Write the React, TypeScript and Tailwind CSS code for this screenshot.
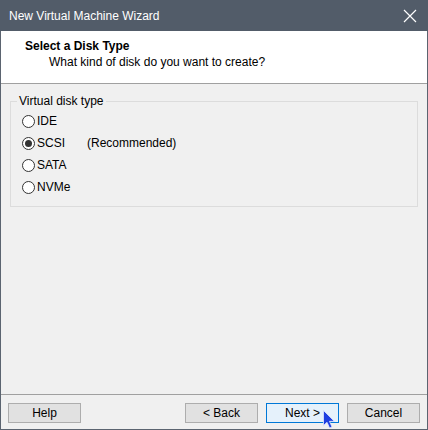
import React from 'react'

const FONT = "font-['Liberation_Sans',_Arial,_sans-serif]"

interface RadioRowProps {
  label: string
  checked?: boolean
  note?: string
}

function RadioRow({ label, checked, note }: RadioRowProps) {
  return (
    <div className="flex items-center h-[22px] ml-[5px]">
      <span className="w-[13px] h-[13px] rounded-full border border-[#333] bg-white flex items-center justify-center shrink-0">
        {checked && <span className="w-[7px] h-[7px] rounded-full bg-[#333]" />}
      </span>
      <span className="ml-[2px] w-[50px]">{label}</span>
      {note && <span>{note}</span>}
    </div>
  )
}

function Button({ children, primary }: { children: React.ReactNode; primary?: boolean }) {
  return (
    <button
      className={`w-[73px] h-[20px] border text-[12px] leading-none text-black flex items-center justify-center ${
        primary ? 'border-[#0078d7] bg-[#e5f1fb]' : 'border-[#adadad] bg-[#e1e1e1]'
      }`}
    >
      {children}
    </button>
  )
}

export default function App() {
  return (
    <div className={`relative w-[428px] h-[430px] flex flex-col text-[12px] text-black ${FONT}`}>
      <div className="h-[31px] bg-[#525c69] flex items-center justify-between pl-[9px] pr-[10px] shrink-0">
        <span className="text-white text-[12px]">New Virtual Machine Wizard</span>
        <svg width="14" height="14" viewBox="0 0 14 14" className="mr-[1px]">
          <path d="M1 1 L13 13 M13 1 L1 13" stroke="white" strokeWidth="1.2" />
        </svg>
      </div>

      <div className="flex-1 flex flex-col border-x border-b border-[#5b6470]">
        <div className="h-[53px] shrink-0 bg-white border-b border-[#a0a0a0] pl-[24px] pt-[7px]">
          <div className="font-bold leading-[16px]">Select a Disk Type</div>
          <div className="pl-[24px] leading-[16px]">What kind of disk do you want to create?</div>
        </div>

        <div className="flex-1 bg-[#f0f0f0] px-[9px] pt-[9px]">
          <fieldset className="h-[114px] border border-[#dcdcdc] px-[6px] pt-px">
            <legend className="px-[2px] leading-[16px]">Virtual disk type</legend>
            <RadioRow label="IDE" />
            <RadioRow label="SCSI" checked note="(Recommended)" />
            <RadioRow label="SATA" />
            <RadioRow label="NVMe" />
          </fieldset>
        </div>

        <div className="h-[35px] shrink-0 bg-[#f0f0f0] border-t border-[#a0a0a0] flex items-start pt-[8px] px-[7px]">
          <Button>Help</Button>
          <div className="flex-1" />
          <div className="flex gap-[8px]">
            <Button>&lt; Back</Button>
            <Button primary>Next &gt;</Button>
            <Button>Cancel</Button>
          </div>
        </div>
      </div>

      <svg
        className="absolute left-[323px] top-[410px]"
        width="13"
        height="19"
        viewBox="0 0 13 19"
      >
        <path
          d="M0.5 0.5 L0.5 15.5 L4 12.2 L6.6 18 L9 17 L6.5 11.3 L11.3 11.3 Z"
          fill="#1f3fe0"
          stroke="#dfe6ff"
          strokeWidth="0.8"
        />
      </svg>
    </div>
  )
}
